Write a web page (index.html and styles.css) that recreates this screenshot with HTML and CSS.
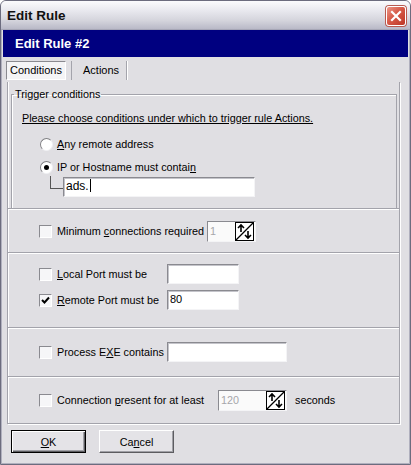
FILE: index.html
```html
<!DOCTYPE html>
<html lang="en">
<head>
  <meta charset="UTF-8" />
  <title>Edit Rule</title>
  <link rel="stylesheet" href="styles.css">
</head>
<body>
  <div class="window">
    <div class="titlebar">
      <span class="title">Edit Rule</span>
      <span class="close">
        <svg width="12" height="12" viewBox="0 0 12 12"><path d="M2 2 L10 10 M10 2 L2 10" stroke="#fff" stroke-width="2.2" stroke-linecap="square"/></svg>
      </span>
    </div>
    <div class="frame">
      <div class="banner">Edit Rule #2</div>
      <div class="tabs">
        <span class="tab active">Conditions</span>
        <span class="tab">Actions</span>
      </div>
      <div class="page">
        <fieldset class="group">
          <legend>Trigger conditions</legend>
          <p class="intro">Please choose conditions under which to trigger rule Actions.</p>
          <div class="row radio-row first">
            <span class="radio"></span>
            <span class="label"><u>A</u>ny remote address</span>
          </div>
          <div class="row radio-row">
            <span class="radio checked"></span>
            <span class="label">IP or Hostname must contai<u>n</u></span>
          </div>
          <div class="row tree-row">
            <span class="tree"></span>
            <span class="textbox host">ads.<span class="caret"></span></span>
          </div>
        </fieldset>

        <div class="section sec-min">
          <div class="row">
            <span class="check"></span>
            <span class="label w-min">Minimum <u>c</u>onnections required</span>
            <span class="spin spin-min"><span class="val">1</span><svg class="spin-btn" width="19" height="19" viewBox="0 0 19 19"><rect x="0.5" y="0.5" width="18" height="18" fill="#fff" stroke="#000"/><path d="M1 18 L18 1" stroke="#000" stroke-width="1.2"/><path d="M6 3 L6 10 M3 6 L6 3 L9 6" stroke="#000" stroke-width="1.6" fill="none"/><path d="M13 9 L13 16 M10 13 L13 16 L16 13" stroke="#000" stroke-width="1.6" fill="none"/></svg></span>
          </div>
        </div>

        <div class="section sec-ports">
          <div class="row">
            <span class="check"></span>
            <span class="label w-port"><u>L</u>ocal Port must be</span>
            <span class="textbox port"></span>
          </div>
          <div class="row second">
            <span class="check checked"><svg width="11" height="11" viewBox="0 0 11 11"><path d="M2 5 L4.5 7.5 L9 2.5" stroke="#000" stroke-width="2" fill="none"/></svg></span>
            <span class="label w-port"><u>R</u>emote Port must be</span>
            <span class="textbox port">80</span>
          </div>
        </div>

        <div class="section sec-exe">
          <div class="row">
            <span class="check"></span>
            <span class="label w-port">Process E<u>X</u>E contains</span>
            <span class="textbox exe"></span>
          </div>
        </div>

        <div class="section sec-time">
          <div class="row">
            <span class="check"></span>
            <span class="label w-time">Connection <u>p</u>resent for at least</span>
            <span class="spin spin-time"><span class="val">120</span><svg class="spin-btn" width="19" height="19" viewBox="0 0 19 19"><rect x="0.5" y="0.5" width="18" height="18" fill="#fff" stroke="#000"/><path d="M1 18 L18 1" stroke="#000" stroke-width="1.2"/><path d="M6 3 L6 10 M3 6 L6 3 L9 6" stroke="#000" stroke-width="1.6" fill="none"/><path d="M13 9 L13 16 M10 13 L13 16 L16 13" stroke="#000" stroke-width="1.6" fill="none"/></svg></span>
            <span class="label seconds">seconds</span>
          </div>
        </div>
      </div>
      <div class="buttons">
        <button class="btn default"><u>O</u>K</button>
        <button class="btn">Ca<u>n</u>cel</button>
      </div>
    </div>
  </div>
</body>
</html>
```

FILE: styles.css
```css
body {
  margin: 0; background: #fff;
  font-family: "Liberation Sans", Arial, sans-serif; font-size: 10.8px; color: #000;
}
.window {
  width: 411px; height: 465px; box-sizing: border-box;
  background: #e0dfe3;
  border: 1px solid #6c6c7e; border-radius: 6px 6px 0 0;
  box-shadow: inset 0 0 0 1px #b0b0be;
  overflow: hidden;
}
.titlebar {
  height: 28px; display: flex; align-items: center; justify-content: space-between;
  padding: 0 4px 0 6px;
  background: linear-gradient(#fbfbfd, #e8e8ee 35%, #d4d4dc 70%, #b9b9c7);
  border-bottom: 1px solid #a6a6b6;
}
.title {
  font-size: 13.5px; font-weight: bold; color: #111; padding-top: 1px;
}
.close {
  width: 18px; height: 18px; margin-top: 1px;
  display: flex; align-items: center; justify-content: center;
  border: 1px solid #fff; border-radius: 3px;
  background: linear-gradient(135deg, #ec9585, #d65a48 45%, #bd3626);
  box-shadow: 0 0 0 1px #b85a50;
}
.frame {
  padding: 0 2px 0 2px;
}
.banner {
  height: 27px; line-height: 27px; padding-left: 12px;
  background: #000080; color: #fff; font-size: 13px; font-weight: bold;
}
.tabs {
  height: 25px; box-sizing: border-box; padding: 4px 0 0 3px;
  display: flex; align-items: flex-start; font-size: 11px;
}
.tab {
  height: 19px; line-height: 19px; padding: 0 11px;
  border-right: 1px solid #a4a4ac; box-shadow: 1px 0 0 #fff;
}
.tab.active {
  width: 60px; box-sizing: border-box; padding: 0; text-align: center;
  background: #f4f4f6;
  border: 1px solid; border-color: #8a8a90 #fff #fff #8a8a90;
  box-shadow: none; margin-right: 5px; line-height: 17px;
}
.tab:not(.active) {
  border-left: 1px solid #a4a4ac; width: 56px; box-sizing: border-box; text-align: center;
}
.page {
  margin-left: 4px; width: 393px; height: 342px; box-sizing: border-box;
  border: 1px solid #a3a3ab; border-top: none;
  box-shadow: inset 1px 0 0 #fff, 1px 1px 0 #fff;
  padding-top: 6px;
}
.group {
  margin: 0 2px 0 3px; padding: 0 0 11px 0;
  border: 1px solid #a3a3ab; border-bottom: none;
  box-shadow: inset 1px 1px 0 #fff;
}
.group legend {
  padding: 0 1px; margin-left: 2px; line-height: 13px;
}
.intro {
  margin: 11px 0 0 10px; line-height: 13px; text-decoration: underline;
}
.row {
  display: flex; align-items: center; height: 20px;
}
.radio-row {
  padding-left: 28px; margin-top: 3px;
}
.radio-row.first {
  margin-top: 9px;
}
.radio {
  width: 11px; height: 11px; border-radius: 50%; position: relative;
  background: #fff; border: 1px solid; border-color: #808084 #f0f0f4 #f0f0f4 #808084;
  margin-right: 4px;
}
.radio.checked::after {
  content: ""; position: absolute; left: 3px; top: 3px;
  width: 5px; height: 5px; border-radius: 50%; background: #000;
}
.label {
  white-space: nowrap;
}
.tree-row {
  padding-left: 38px; align-items: flex-start;
}
.tree {
  width: 12px; height: 12px; border-left: 1px solid #555; border-bottom: 1px solid #555;
  margin-top: -1px;
}
.textbox {
  height: 20px; box-sizing: border-box; line-height: 17px; padding-left: 2px;
  background: #fff;
  border: 1px solid; border-color: #8a8a90 #f4f4f6 #f4f4f6 #8a8a90;
  box-shadow: inset 1px 1px 0 #c4c4ca;
}
.host {
  width: 192px; font-size: 12px;
}
.caret {
  display: inline-block; width: 1px; height: 13px; background: #000;
  vertical-align: -2px; margin-left: 1px;
}
.section {
  box-sizing: border-box;
  border-top: 1px solid #a3a3ab; box-shadow: inset 0 1px 0 #fff;
  padding-left: 31px;
}
.sec-min { height: 44px; padding-top: 12px; }
.sec-ports { height: 75px; padding-top: 11px; }
.sec-ports .second { margin-top: 6px; }
.sec-exe { height: 49px; padding-top: 14px; }
.sec-time { height: 48px; padding-top: 13px; }
.check {
  width: 13px; height: 13px; box-sizing: border-box; margin-right: 5px;
  background: #f6f6f8;
  border: 1px solid; border-color: #8a8a90 #fff #fff #8a8a90;
  display: flex; align-items: center; justify-content: center;
}
.w-min { width: 150px; }
.w-port { width: 110px; }
.w-time { width: 161px; }
.port { width: 72px; font-size: 11px; }
.exe { width: 120px; }
.spin {
  height: 21px; box-sizing: border-box; display: flex; align-items: center; justify-content: space-between;
  background: #fafafa; padding: 0 1px 0 2px;
  border: 1px solid; border-color: #8a8a90 #f4f4f6 #f4f4f6 #8a8a90;
  color: #a6a6aa;
}
.spin-min { width: 49px; }
.spin-time { width: 69px; }
.seconds { margin-left: 8px; }
.buttons {
  display: flex; gap: 13px; padding: 6px 0 0 8px;
}
.btn {
  width: 75px; height: 23px; padding: 0;
  font: inherit; color: #000; background: #e4e3e7;
  border: 1px solid; border-color: #fff #5c5c60 #5c5c60 #fff;
  box-shadow: inset -1px -1px 0 #a0a0a6;
}
.btn.default {
  border: 1px solid #000;
  box-shadow: inset 1px 1px 0 #fff, inset -1px -1px 0 #5c5c60, inset -2px -2px 0 #a0a0a6;
}
```
